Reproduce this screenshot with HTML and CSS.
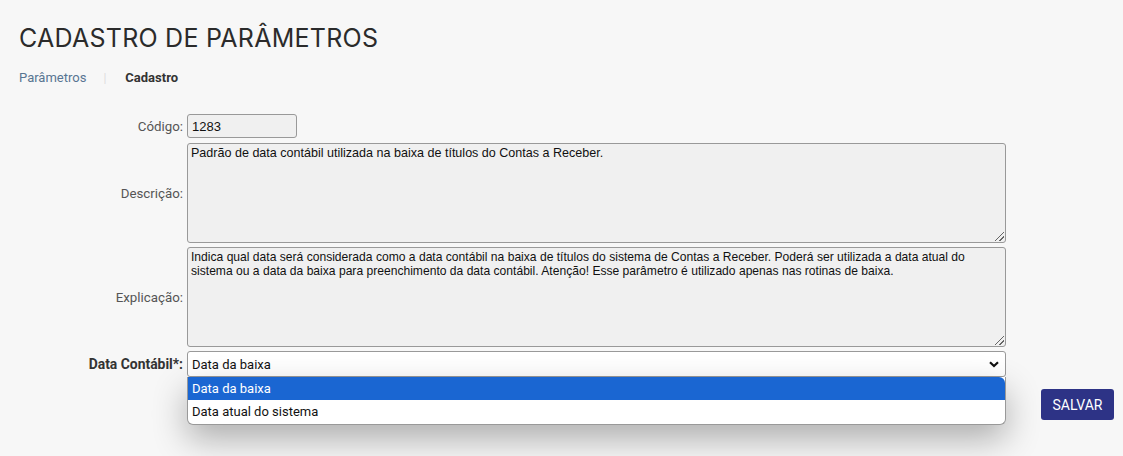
FILE: index.html
```html
<!DOCTYPE html>
<html lang="pt-BR">
<head>
<meta charset="utf-8">
<title>Cadastro de Parâmetros</title>
<link rel="stylesheet" href="styles.css">
</head>
<body>
<div class="page">
  <h1 class="title">CADASTRO DE PARÂMETROS</h1>
  <nav class="crumbs">
    <span class="crumb-link">Parâmetros</span>
    <span class="crumb-sep">|</span>
    <span class="crumb-current">Cadastro</span>
  </nav>
  <form class="form">
    <div class="row row-code">
      <label class="label">Código:</label>
      <div class="input code">1283</div>
    </div>
    <div class="row">
      <label class="label">Descrição:</label>
      <div class="textarea">Padrão de data contábil utilizada na baixa de títulos do Contas a Receber.<span class="grip"></span></div>
    </div>
    <div class="row">
      <label class="label">Explicação:</label>
      <div class="textarea textarea-long">Indica qual data será considerada como a data contábil na baixa de títulos do sistema de Contas a Receber. Poderá ser utilizada a data atual do sistema ou a data da baixa para preenchimento da data contábil. Atenção! Esse parâmetro é utilizado apenas nas rotinas de baixa.<span class="grip"></span></div>
    </div>
    <div class="row">
      <label class="label bold">Data Contábil*:</label>
      <div class="select-wrap">
        <div class="select">
          <span>Data da baixa</span>
          <svg class="chev" width="10" height="7" viewBox="0 0 10 7"><path d="M1 1.2 L5 5 L9 1.2" fill="none" stroke="#111" stroke-width="2.2"/></svg>
        </div>
        <ul class="menu">
          <li class="opt active">Data da baixa</li>
          <li class="opt">Data atual do sistema</li>
        </ul>
      </div>
    </div>
    <div class="actions">
      <button type="button" class="btn">SALVAR</button>
    </div>
  </form>
</div>
</body>
</html>
```
FILE: styles.css
```css
* { box-sizing: border-box; }
html, body { margin: 0; padding: 0; }
body {
  background: #f7f7f7;
  font-family: Roboto, "Liberation Sans", Arial, sans-serif;
  color: #333;
  width: 1123px;
  height: 456px;
  overflow: hidden;
}
.page { padding: 22px 9px 0 19px; }
.title {
  margin: 0;
  font-family: Inter, "Noto Sans", sans-serif;
  font-weight: 400;
  font-size: 25px;
  line-height: 32px;
  letter-spacing: 0.25px;
  color: #2b2b2b;
}
.crumbs {
  display: flex;
  align-items: center;
  margin-top: 16px;
  font-size: 13px;
  line-height: 16px;
}
.crumb-link { color: #577592; }
.crumb-sep { color: #ddd; margin: 0 19px 0 17px; font-size: 12px; }
.crumb-current { color: #333; font-weight: 700; }
.form { margin-top: 28px; display: flex; flex-direction: column; gap: 4px; }
.row { display: flex; align-items: center; gap: 4px; }
.row-code { margin-bottom: 1px; }
.label {
  width: 164px;
  text-align: right;
  font-size: 13.3px;
  color: #555;
}
.label.bold { font-weight: 700; color: #333; font-size: 13.9px; }
.input, .textarea {
  background: #f0f0f0;
  border: 1px solid #999;
  border-radius: 3px;
  font-family: "Liberation Sans", Arial, sans-serif;
  color: #111;
}
.code { width: 110px; height: 24px; padding: 4px 0 0 4px; line-height: 15px; font-size: 13px; }
.textarea {
  position: relative;
  width: 819px;
  height: 100px;
  padding: 2px 3px;
  font-size: 12.55px;
  line-height: 14px;
}
.textarea-long { font-size: 12.1px; }
.grip {
  position: absolute;
  right: 1px; bottom: 1px;
  width: 9px; height: 9px;
  background: linear-gradient(135deg, transparent 45%, #666 45%, #666 53%, transparent 53%, transparent 72%, #666 72%, #666 80%, transparent 80%);
}
.select-wrap { position: relative; width: 819px; }
.select {
  height: 26px;
  background: #fff;
  border: 1px solid #999;
  border-radius: 3px;
  display: flex;
  align-items: center;
  justify-content: space-between;
  padding: 0 6px 0 4px;
  font-size: 13px;
  color: #111;
}
.chev { display: block; }
.menu {
  position: absolute;
  left: 0; top: 26px;
  width: 819px;
  margin: 0; padding: 0;
  list-style: none;
  background: #fff;
  border: 1px solid #999;
  border-top: none;
  border-radius: 0 0 6px 6px;
  box-shadow: 0 14px 34px rgba(0,0,0,0.3);
  overflow: hidden;
  z-index: 2;
}
.opt { height: 24px; line-height: 24px; padding-left: 4px; font-size: 13px; color: #111; }
.opt.active { background: #1a66d2; color: #fff; height: 23px; line-height: 23px; border-radius: 0 6px 0 0; }
.actions { display: flex; justify-content: flex-end; margin-top: 8px; }
.btn {
  width: 73px;
  height: 31px;
  background: #2d3386;
  color: #fff;
  border: none;
  border-radius: 3px;
  font-family: Roboto, sans-serif;
  font-size: 14px;
  padding: 0;
}
```
